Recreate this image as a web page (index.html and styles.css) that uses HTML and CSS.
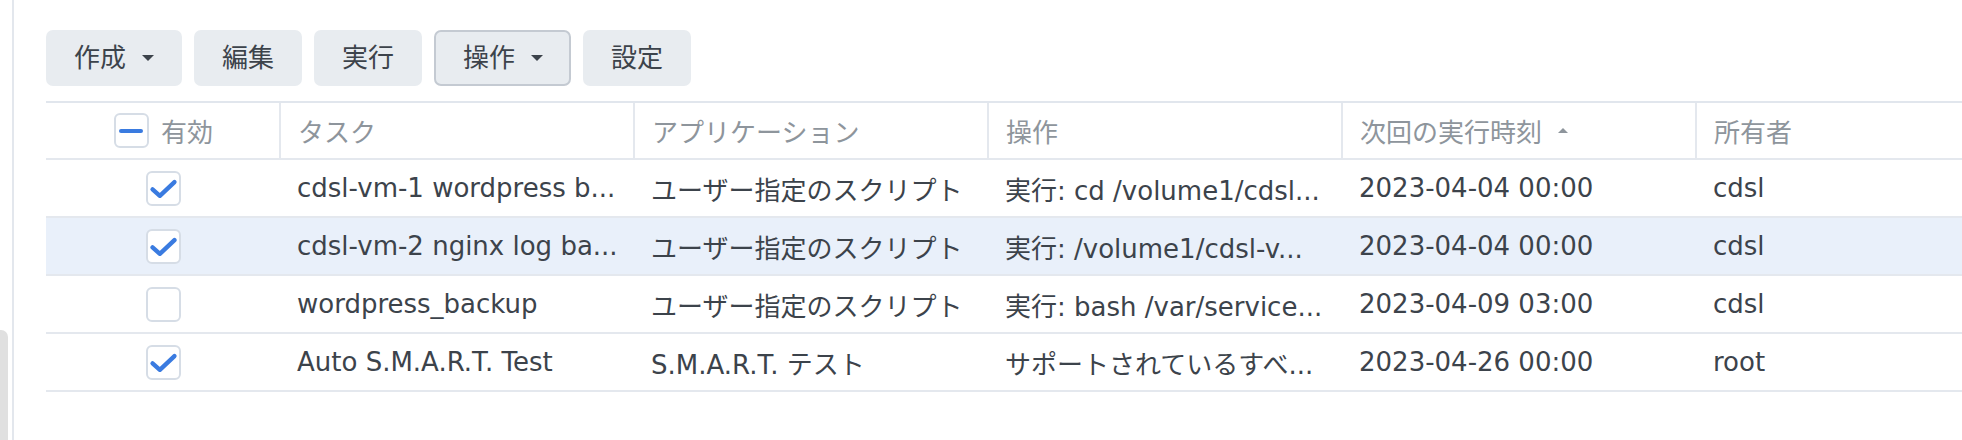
FILE: index.html
```html
<!DOCTYPE html>
<html lang="ja">
<head>
<meta charset="utf-8">
<title>タスクスケジューラ</title>
<link rel="stylesheet" href="styles.css">
</head>
<body>
<div class="page">
  <div class="rail"><div class="rail-thumb"></div></div>
  <div class="main">
    <div class="toolbar">
      <button class="btn">作成<span class="caret"></span></button>
      <button class="btn">編集</button>
      <button class="btn">実行</button>
      <button class="btn btn-active">操作<span class="caret"></span></button>
      <button class="btn">設定</button>
    </div>
    <div class="grid">
      <div class="row head">
        <div class="cell c-check"><span class="cb"><span class="minus"></span></span><span class="head-label">有効</span></div>
        <div class="cell">タスク</div>
        <div class="cell">アプリケーション</div>
        <div class="cell">操作</div>
        <div class="cell">次回の実行時刻<span class="sort"></span></div>
        <div class="cell last">所有者</div>
      </div>

      <div class="row">
        <div class="cell c-check"><span class="cb"><svg viewBox="0 0 34 34" class="tick"><path d="M5 18 L13 25 L29 10"/></svg></span></div>
        <div class="cell">cdsl-vm-1 wordpress b...</div>
        <div class="cell">ユーザー指定のスクリプト</div>
        <div class="cell">実行: cd /volume1/cdsl...</div>
        <div class="cell">2023-04-04 00:00</div>
        <div class="cell">cdsl</div>
      </div>

      <div class="row selected">
        <div class="cell c-check"><span class="cb"><svg viewBox="0 0 34 34" class="tick"><path d="M5 18 L13 25 L29 10"/></svg></span></div>
        <div class="cell">cdsl-vm-2 nginx log ba...</div>
        <div class="cell">ユーザー指定のスクリプト</div>
        <div class="cell">実行: /volume1/cdsl-v...</div>
        <div class="cell">2023-04-04 00:00</div>
        <div class="cell">cdsl</div>
      </div>

      <div class="row">
        <div class="cell c-check"><span class="cb"></span></div>
        <div class="cell">wordpress_backup</div>
        <div class="cell">ユーザー指定のスクリプト</div>
        <div class="cell">実行: bash /var/service...</div>
        <div class="cell">2023-04-09 03:00</div>
        <div class="cell">cdsl</div>
      </div>

      <div class="row">
        <div class="cell c-check"><span class="cb"><svg viewBox="0 0 34 34" class="tick"><path d="M5 18 L13 25 L29 10"/></svg></span></div>
        <div class="cell">Auto S.M.A.R.T. Test</div>
        <div class="cell">S.M.A.R.T. テスト</div>
        <div class="cell">サポートされているすべ...</div>
        <div class="cell">2023-04-26 00:00</div>
        <div class="cell">root</div>
      </div>
    </div>
  </div>
</div>
</body>
</html>
```

FILE: styles.css
```css
html, body {
  margin: 0;
  padding: 0;
  background: #ffffff;
}

body {
  font-family: "DejaVu Sans", "Noto Sans CJK JP", sans-serif;
  font-size: 26px;
  color: #3c434b;
  overflow: hidden;
}

.page {
  display: flex;
  height: 440px;
  width: 1962px;
  overflow: hidden;
}

.rail {
  width: 8px;
  flex: 0 0 8px;
  margin-right: 4px;
}

.rail-thumb {
  margin-top: 330px;
  height: 110px;
  background: #e0e0e0;
  border-radius: 0 7px 0 0;
}

.main {
  flex: 1 1 auto;
  border-left: 2px solid #e3e7ed;
  padding-left: 32px;
  padding-top: 30px;
  min-width: 0;
}

.toolbar {
  display: flex;
  gap: 12px;
  height: 56px;
  margin-bottom: 15px;
}

.btn {
  display: flex;
  align-items: center;
  height: 56px;
  padding: 0 28px;
  border: 0;
  border-radius: 7px;
  background: #e8ecf0;
  color: #3c434b;
  font-family: "DejaVu Sans", "Noto Sans CJK JP", sans-serif;
  font-size: 26px;
  line-height: 1;
}

.btn-active {
  border: 2px solid #c4cad2;
  padding: 0 26px 0 27px;
}

.caret {
  display: inline-block;
  margin-left: 16px;
  width: 0;
  height: 0;
  border-left: 6px solid transparent;
  border-right: 6px solid transparent;
  border-top: 6px solid #3c434b;
}

.grid {
  width: 2005px;
  border-top: 2px solid #e1e6ed;
}

.row {
  display: grid;
  grid-template-columns: 235px 354px 354px 354px 354px 354px;
  height: 56px;
  border-bottom: 2px solid #e4e8ee;
}

.row.head {
  height: 55px;
  color: #8e959c;
}

.row.selected {
  background: #e9f0fa;
}

.cell {
  display: flex;
  align-items: center;
  padding-left: 16px;
  white-space: nowrap;
  overflow: hidden;
}

.head .cell {
  border-right: 2px solid #e4e8ee;
  padding-left: 17px;
}

.head .cell.last {
  border-right: 0;
}

.head .cell.c-check,
.cell.c-check {
  justify-content: center;
  padding-left: 0;
}

.head .cell.c-check {
  padding-left: 2px;
}

.head-label {
  margin-left: 12px;
}

.cb {
  box-sizing: border-box;
  width: 35px;
  height: 35px;
  border: 2px solid #d6dde6;
  border-radius: 6px;
  background: #ffffff;
  display: flex;
  align-items: center;
  justify-content: center;
}

.minus {
  width: 24px;
  height: 4px;
  border-radius: 2px;
  background: #3a7be0;
}

.tick {
  width: 31px;
  height: 31px;
}

.tick path {
  fill: none;
  stroke: #3a7be0;
  stroke-width: 4.8;
  stroke-linecap: round;
  stroke-linejoin: round;
}

.sort {
  display: inline-block;
  margin-left: 16px;
  width: 0;
  height: 0;
  border-left: 5px solid transparent;
  border-right: 5px solid transparent;
  border-bottom: 5px solid #8e959c;
}
```
